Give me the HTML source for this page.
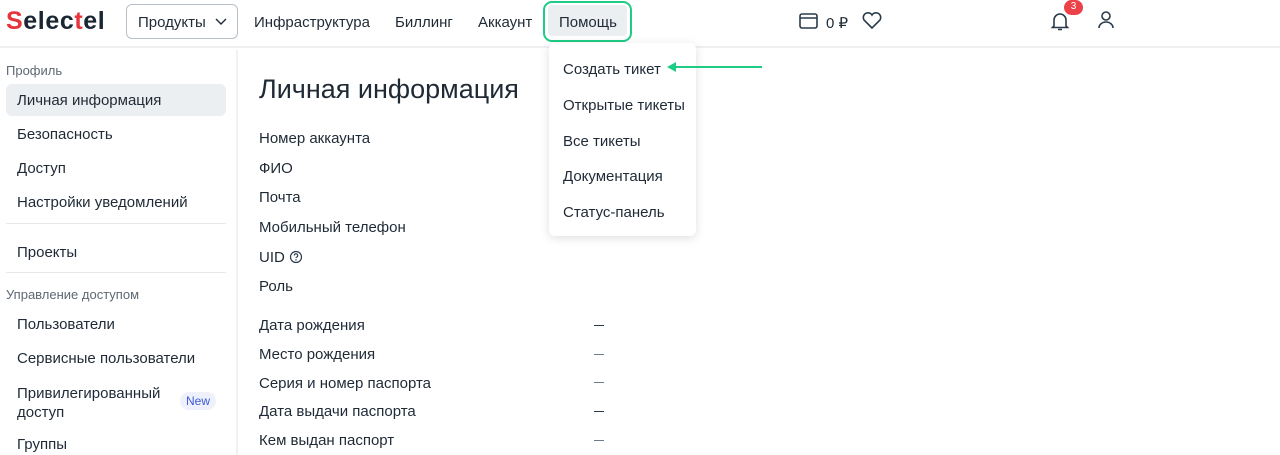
<!DOCTYPE html>
<html><head><meta charset="utf-8"><style>
*{box-sizing:border-box;margin:0;padding:0}
body{width:1280px;height:455px;overflow:hidden;background:#fff;font-family:"Liberation Sans",sans-serif;color:#1f2a36;position:relative}
.a{position:absolute;white-space:nowrap}
.t15{font-size:15px}
.hdr{position:absolute;left:0;top:0;width:1280px;height:48px;border-bottom:2px solid #eef0f2}
.side{position:absolute;left:236px;top:50px;width:2px;height:405px;background:#f0f1f3}
.sl{font-size:15px;left:17px}
.lab{font-size:15px;left:259px}
.dash{left:594px;width:10px;height:1px;background:#2a3a4a}
</style></head><body>
<div class="hdr"></div>
<div class="a" style="left:6px;top:7px;font-size:25px;font-weight:bold;letter-spacing:0.6px;color:#1a2733"><span style="color:#e5343c">S</span>elec<span style="color:#e5343c">t</span>el</div>
<div class="a t15" style="left:126px;top:4px;width:112px;height:35px;border:1px solid #b9bfc6;border-radius:6px;padding:9px 0 0 11px">Продукты <svg width="14" height="10" viewBox="0 0 14 10" style="margin-left:4px"><path d="M2 2l5 5 5-5" fill="none" stroke="#1f2a36" stroke-width="1.4"/></svg></div>
<div class="a t15" style="left:254px;top:14px">Инфраструктура</div>
<div class="a t15" style="left:395px;top:14px">Биллинг</div>
<div class="a t15" style="left:478px;top:14px">Аккаунт</div>
<div class="a" style="left:543px;top:1px;width:89px;height:41px;border:2px solid #1fcc86;border-radius:9px"></div>
<div class="a t15" style="left:548px;top:5px;width:79px;height:31px;background:#eceff2;border-radius:4px;padding:9px 0 0 11px">Помощь</div>
<svg class="a" style="left:798px;top:11px" width="22" height="20" viewBox="0 0 22 20"><rect x="2" y="3" width="17" height="14" rx="2" fill="none" stroke="#2a3a4a" stroke-width="1.6"/><path d="M2 7h17" stroke="#2a3a4a" stroke-width="1.6"/></svg>
<div class="a t15" style="left:826px;top:14px">0 ₽</div>
<svg class="a" style="left:861px;top:10px" width="22" height="20" viewBox="0 0 22 20"><path d="M11 18L3 10a4.5 4.5 0 0 1 8-5 4.5 4.5 0 0 1 8 5z" fill="none" stroke="#2a3a4a" stroke-width="1.6"/></svg>
<svg class="a" style="left:1048px;top:9px" width="24" height="24" viewBox="0 0 24 24"><path d="M6 17V11a6 6 0 0 1 12 0v6l1.5 1.5h-15z M10 20.5h4" fill="none" stroke="#2a3a4a" stroke-width="1.6"/></svg>
<div class="a" style="left:1064px;top:0;width:19px;height:15px;border-radius:8px;background:#ec4149;color:#fff;font-size:10px;text-align:center;line-height:14px">3</div>
<svg class="a" style="left:1095px;top:9px" width="22" height="22" viewBox="0 0 22 22"><circle cx="11" cy="7" r="4" fill="none" stroke="#2a3a4a" stroke-width="1.6"/><path d="M4 19a7 6 0 0 1 14 0" fill="none" stroke="#2a3a4a" stroke-width="1.6"/></svg>

<div class="side"></div>
<div class="a" style="left:6px;top:63px;font-size:13px;color:#5d6873">Профиль</div>
<div class="a" style="left:6px;top:84px;width:220px;height:32px;background:#eceff2;border-radius:6px"></div>
<div class="a sl" style="top:92px">Личная информация</div>
<div class="a sl" style="top:126px">Безопасность</div>
<div class="a sl" style="top:160px">Доступ</div>
<div class="a sl" style="top:194px">Настройки уведомлений</div>
<div class="a" style="left:6px;top:223px;width:220px;height:1px;background:#e6e8eb"></div>
<div class="a sl" style="top:244px">Проекты</div>
<div class="a" style="left:6px;top:272px;width:220px;height:1px;background:#e6e8eb"></div>
<div class="a" style="left:6px;top:287px;font-size:13px;color:#5d6873">Управление доступом</div>
<div class="a sl" style="top:316px">Пользователи</div>
<div class="a sl" style="top:350px">Сервисные пользователи</div>
<div class="a sl" style="top:384px;line-height:19px">Привилегированный<br>доступ</div>
<div class="a" style="left:180px;top:392px;width:36px;height:18px;border-radius:9px;background:#eef1fb;color:#3d5bd9;font-size:12px;text-align:center;line-height:18px">New</div>
<div class="a sl" style="top:436px">Группы</div>

<div class="a" style="left:259px;top:74px;font-size:27px">Личная информация</div>
<div class="a lab" style="top:130px">Номер аккаунта</div>
<div class="a lab" style="top:160px">ФИО</div>
<div class="a lab" style="top:189px">Почта</div>
<div class="a lab" style="top:219px">Мобильный телефон</div>
<div class="a lab" style="top:249px">UID <svg width="14" height="14" viewBox="0 0 14 14" style="vertical-align:-2px"><circle cx="7" cy="7" r="5.5" fill="none" stroke="#2a3a4a" stroke-width="1.2"/><path d="M5.3 5.5a1.7 1.7 0 1 1 2.3 1.6c-.5.2-.6.5-.6 1" fill="none" stroke="#2a3a4a" stroke-width="1.1"/><circle cx="7" cy="10" r=".7" fill="#2a3a4a"/></svg></div>
<div class="a lab" style="top:278px">Роль</div>
<div class="a lab" style="top:317px">Дата рождения</div>
<div class="a lab" style="top:346px">Место рождения</div>
<div class="a lab" style="top:375px">Серия и номер паспорта</div>
<div class="a lab" style="top:403px">Дата выдачи паспорта</div>
<div class="a lab" style="top:432px">Кем выдан паспорт</div>
<div class="a dash" style="top:325px"></div>
<div class="a dash" style="top:354px;background:#6d7c8a"></div>
<div class="a dash" style="top:382px;background:#6d7c8a"></div>
<div class="a dash" style="top:411px"></div>
<div class="a dash" style="top:440px;background:#6d7c8a"></div>

<div class="a" style="left:549px;top:43px;width:147px;height:193px;background:#fff;border-radius:6px;box-shadow:0 2px 10px rgba(0,0,0,.13)"></div>
<div class="a t15" style="left:563px;top:61px">Создать тикет</div>
<div class="a t15" style="left:563px;top:97px">Открытые тикеты</div>
<div class="a t15" style="left:563px;top:133px">Все тикеты</div>
<div class="a t15" style="left:563px;top:168px">Документация</div>
<div class="a t15" style="left:563px;top:204px">Статус-панель</div>
<svg class="a" style="left:665px;top:61px" width="100" height="12" viewBox="0 0 100 12"><path d="M8 6H97" stroke="#1fcc86" stroke-width="2"/><path d="M2 6l9-5v10z" fill="#1fcc86"/></svg>
</body></html>
